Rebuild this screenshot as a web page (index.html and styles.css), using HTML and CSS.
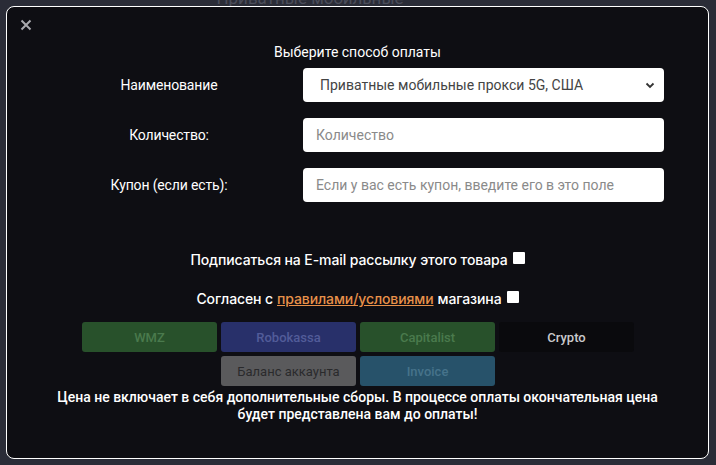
FILE: index.html
```html
<!DOCTYPE html>
<html lang="ru">
<head>
<meta charset="utf-8">
<title>Оплата</title>
<link rel="stylesheet" href="styles.css">
</head>
<body>
<div class="backdrop">
  <div class="bg-title">Приватные мобильные</div>
</div>
<div class="modal">
  <svg class="close" width="12" height="12" viewBox="0 0 12 12"><path d="M1.5 1.5 L10.5 10.5 M10.5 1.5 L1.5 10.5" stroke="#a9a9ae" stroke-width="2" fill="none"/></svg>
  <h2 class="title">Выберите способ оплаты</h2>
  <div class="form">
    <label class="lbl">Наименование</label>
    <div class="select">
      <span>Приватные мобильные прокси 5G, США</span>
      <svg class="chev" width="10" height="8" viewBox="0 0 10 8"><path d="M1.5 2.5 L5 6 L8.5 2.5" fill="none" stroke="#333" stroke-width="1.8"/></svg>
    </div>
    <label class="lbl">Количество:</label>
    <div class="input placeholder">Количество</div>
    <label class="lbl">Купон (если есть):</label>
    <div class="input placeholder">Если у вас есть купон, введите его в это поле</div>
  </div>
  <div class="checks">
    <div class="check-line">Подписаться на E-mail рассылку этого товара <span class="box"></span></div>
    <div class="check-line">Согласен с <a class="link">правилами/условиями</a> магазина <span class="box"></span></div>
  </div>
  <div class="pay">
    <div class="pay-row">
      <div class="btn wmz">WMZ</div>
      <div class="btn robo">Robokassa</div>
      <div class="btn cap">Capitalist</div>
      <div class="btn crypto">Crypto</div>
    </div>
    <div class="pay-row">
      <div class="btn balance">Баланс аккаунта</div>
      <div class="btn invoice">Invoice</div>
    </div>
  </div>
  <p class="note">Цена не включает в себя дополнительные сборы. В процессе оплаты окончательная цена<br>будет представлена вам до оплаты!</p>
</div>
</body>
</html>
```
FILE: styles.css
```css
html, body {
  margin: 0;
  padding: 0;
  width: 716px;
  height: 465px;
  overflow: hidden;
  background: #2a2c37;
  font-family: Roboto, "Liberation Sans", Arial, sans-serif;
}
.backdrop {
  height: 465px;
  display: flex;
  justify-content: center;
}
.bg-title {
  margin-top: -12px;
  margin-left: -96px;
  font-size: 17px;
  color: #4a4d5a;
}
.modal {
  position: absolute;
  left: 6px;
  top: 6px;
  width: 701px;
  height: 451px;
  border: 1px solid #ffffff;
  border-radius: 8px;
  background: #0e0e13;
  color: #fff;
  display: flex;
  flex-direction: column;
  align-items: center;
}
.close {
  position: absolute;
  left: 13px;
  top: 12px;
}
.title {
  margin: 36px 0 0;
  font-size: 14px;
  font-weight: 400;
  line-height: 18px;
}
.form {
  align-self: flex-start;
  margin-left: 38px;
  margin-top: 7px;
  display: grid;
  grid-template-columns: 258px 361px;
  row-gap: 16px;
  align-items: center;
}
.lbl {
  text-align: center;
  font-size: 14px;
  color: #fff;
  letter-spacing: -0.15px;
  padding-right: 10px;
}
.select, .input {
  height: 34px;
  box-sizing: border-box;
  background: #fff;
  border-radius: 4px;
  display: flex;
  align-items: center;
  font-size: 14px;
}
.select {
  color: #444;
  padding: 0 9px 0 17px;
  justify-content: space-between;
}
.input {
  padding-left: 13px;
}
.placeholder {
  color: #8a8a8a;
}
.checks {
  margin-top: 48px;
  display: flex;
  flex-direction: column;
  align-items: center;
  gap: 19px;
  font-family: Inter, "Noto Sans", sans-serif;
  font-size: 14px;
  font-weight: 500;
  letter-spacing: -0.1px;
}
.check-line {
  display: flex;
  align-items: center;
  line-height: 20px;
}
.box {
  display: inline-block;
  width: 12px;
  height: 12px;
  background: #fff;
  border-radius: 1px;
  margin-left: 5px;
  margin-bottom: 4px;
}
.link {
  color: #e8914a;
  text-decoration: underline;
  margin: 0 4px;
}
.pay {
  margin-top: 13px;
  align-self: flex-start;
  margin-left: 75px;
  display: flex;
  flex-direction: column;
  gap: 4px;
}
.pay-row {
  display: flex;
  gap: 4px;
}
.pay-row:last-child {
  margin-left: 139px;
}
.btn {
  width: 135px;
  height: 30px;
  border-radius: 3px;
  display: flex;
  align-items: center;
  justify-content: center;
  font-size: 13px;
  font-weight: 500;
}
.wmz, .cap { background: #28512b; color: #4a7a4d; }
.robo { background: #28306a; color: #525c99; }
.crypto { background: #0a0a0d; color: #c9c9cc; }
.balance { background: #5a5a5c; color: #2a2a2c; font-weight: 400; }
.invoice { background: #27526a; color: #46738b; }
.note {
  margin: 3px 0 0;
  text-align: center;
  font-size: 14px;
  font-weight: 500;
  line-height: 17px;
  color: #fff;
}
```
